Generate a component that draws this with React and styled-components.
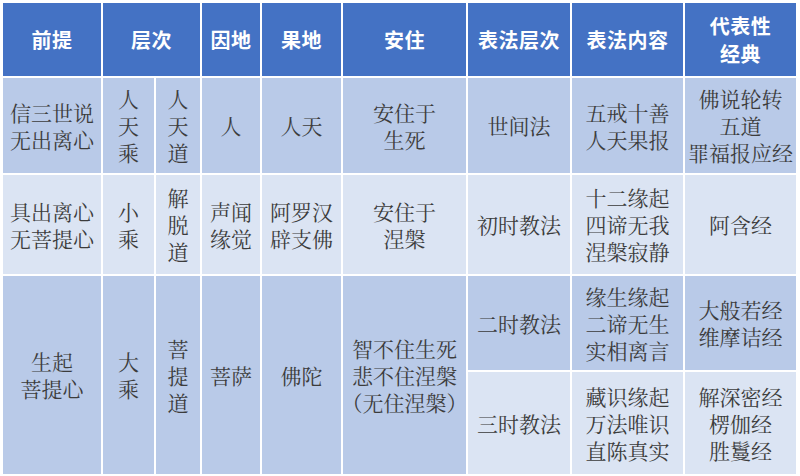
import React from "react";
import styled, { createGlobalStyle } from "styled-components";

const GlobalStyle = createGlobalStyle`
  html, body {
    margin: 0;
    padding: 0;
    background: #ffffff;
  }
  body {
    font-family: "Noto Serif CJK SC", "Noto Sans CJK SC", serif;
  }
`;

const Page = styled.div`
  width: 800px;
  height: 476px;
  padding: 3px;
  box-sizing: border-box;
  background: #ffffff;
`;

const Table = styled.div`
  display: grid;
  grid-template-columns: 98px 51px 44px 58px 79px 123px 102px 111px 111px;
  grid-template-rows: 73px 95px 99px 94px 102px;
  gap: 2px;
  background: #ffffff;
`;

const tones = {
  head: "#4472c4",
  dark: "#b9cae8",
  light: "#dbe4f3",
};

const Cell = styled.div`
  display: flex;
  flex-direction: column;
  align-items: center;
  justify-content: center;
  text-align: center;
  background: ${({ tone }) => tones[tone]};
  grid-column: ${({ col }) => col || "auto"};
  grid-row: ${({ row }) => row || "auto"};
  font-size: 21px;
  line-height: 27px;
  color: #3c3c3c;
  white-space: nowrap;
  overflow: hidden;
  text-spacing-trim: space-all;
  font-variant-east-asian: full-width;
`;

const HeadCell = styled(Cell)`
  font-family: "Noto Sans CJK SC", sans-serif;
  font-weight: 700;
  color: #ffffff;
  font-size: 20px;
  line-height: 28px;
  letter-spacing: 0.5px;
`;

const Line = styled.span`
  display: block;
`;

const Lines = ({ text }) =>
  text.split("|").map((t, i) => <Line key={i}>{t}</Line>);

const headers = [
  { t: "前提" },
  { t: "层次", col: "span 2" },
  { t: "因地" },
  { t: "果地" },
  { t: "安住" },
  { t: "表法层次" },
  { t: "表法内容" },
  { t: "代表性|经典" },
];

const body = [
  { tone: "dark", cells: [
    "信三世说|无出离心", "人|天|乘", "人|天|道", "人", "人天",
    "安住于|生死", "世间法", "五戒十善|人天果报", "佛说轮转|五道|罪福报应经",
  ] },
  { tone: "light", cells: [
    "具出离心|无菩提心", "小|乘", "解|脱|道", "声闻|缘觉", "阿罗汉|辟支佛",
    "安住于|涅槃", "初时教法", "十二缘起|四谛无我|涅槃寂静", "阿含经",
  ] },
];

const bigRow = ["生起|菩提心", "大|乘", "菩|提|道", "菩萨", "佛陀", "智不住生死|悲不住涅槃|（无住涅槃）"];

const App = () => (
  <Page>
    <GlobalStyle />
    <Table>
      {headers.map((h) => (
        <HeadCell tone="head" col={h.col} key={h.t}>
          <Lines text={h.t} />
        </HeadCell>
      ))}
      {body.map((r) =>
        r.cells.map((c, i) => (
          <Cell tone={r.tone} key={r.tone + i}>
            <Lines text={c} />
          </Cell>
        ))
      )}
      {bigRow.map((c, i) => (
        <Cell tone="dark" row="span 2" key={"big" + i}>
          <Lines text={c} />
        </Cell>
      ))}
      <Cell tone="dark"><Lines text="二时教法" /></Cell>
      <Cell tone="dark"><Lines text="缘生缘起|二谛无生|实相离言" /></Cell>
      <Cell tone="dark"><Lines text="大般若经|维摩诘经" /></Cell>
      <Cell tone="light"><Lines text="三时教法" /></Cell>
      <Cell tone="light"><Lines text="藏识缘起|万法唯识|直陈真实" /></Cell>
      <Cell tone="light"><Lines text="解深密经|楞伽经|胜鬘经" /></Cell>
    </Table>
  </Page>
);

export default App;
